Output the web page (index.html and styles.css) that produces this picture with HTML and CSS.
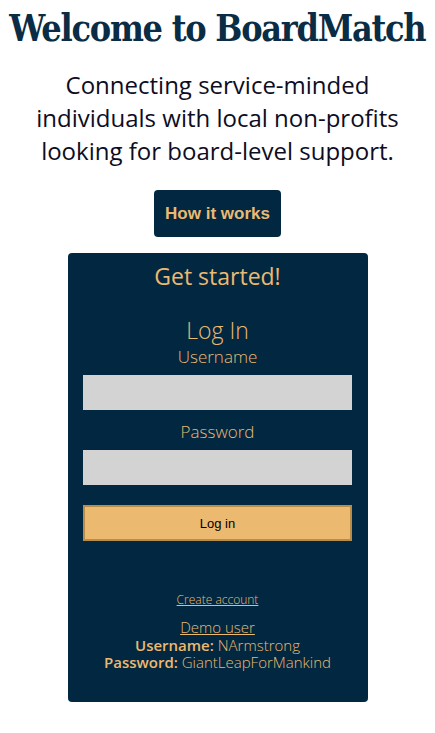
FILE: index.html
```html
<!DOCTYPE html>
<html lang="en">
<head>
<meta charset="utf-8">
<title>BoardMatch</title>
<link rel="stylesheet" href="styles.css">
</head>
<body>
<main class="page">
  <h1 class="title">Welcome to BoardMatch</h1>
  <p class="tagline">Connecting service-minded individuals with local non-profits looking for board-level support.</p>
  <a class="how-btn" href="#">How it works</a>
  <section class="card">
    <h2 class="card-heading">Get started!</h2>
    <form class="login">
      <h3 class="login-title">Log In</h3>
      <label class="field-label" for="u">Username</label>
      <input class="field" id="u" type="text">
      <label class="field-label" for="p">Password</label>
      <input class="field" id="p" type="password">
      <button class="submit" type="button">Log in</button>
    </form>
    <a class="create" href="#">Create account</a>
    <div class="demo">
      <a class="demo-link" href="#">Demo user</a>
      <div class="demo-line"><b>Username:</b> NArmstrong</div>
      <div class="demo-line"><b>Password:</b> GiantLeapForMankind</div>
    </div>
  </section>
</main>
</body>
</html>
```
FILE: styles.css
```css
html, body { margin: 0; padding: 0; background: #fff; }
.page {
  display: flex;
  flex-direction: column;
  align-items: center;
  overflow-x: hidden;
  font-family: "Open Sans", "Noto Sans", sans-serif;
}
.title {
  margin: 4px 0 0;
  font-family: "DejaVu Serif", serif;
  font-weight: bold;
  font-size: 38px;
  line-height: 48px;
  color: #0a2c44;
  letter-spacing: -1.5px;
  white-space: nowrap;
  transform: scaleX(0.845);
}
.tagline {
  margin: 16px 0 0;
  width: 390px;
  text-align: center;
  font-size: 24px;
  line-height: 33px;
  color: #0d0d1f;
}
.how-btn {
  margin-top: 23px;
  display: flex;
  align-items: center;
  justify-content: center;
  width: 127px;
  height: 47px;
  box-sizing: border-box;
  background: #012840;
  border-radius: 4px;
  color: #ecb970;
  font-family: "Liberation Sans", Arial, sans-serif;
  font-weight: bold;
  font-size: 17px;
  text-decoration: none;
}
.card {
  margin-top: 16px;
  width: 300px;
  height: 449px;
  box-sizing: border-box;
  padding: 7px 15px 0;
  background: #012840;
  border-radius: 4px;
  color: #ecb970;
  display: flex;
  flex-direction: column;
  align-items: center;
}
.card-heading {
  margin: 0;
  font-weight: 400;
  font-size: 23px;
  line-height: 32px;
}
.login {
  margin-top: 24px;
  width: 100%;
  display: flex;
  flex-direction: column;
  align-items: center;
}
.login-title {
  margin: 0 0 2px;
  font-weight: 300;
  font-size: 23px;
  line-height: 28px;
}
.field-label {
  font-weight: 300;
  font-size: 17px;
  line-height: 22px;
}
.field {
  margin: 7px 0 11px;
  width: 269px;
  height: 35px;
  box-sizing: border-box;
  border: none;
  background: #d3d3d3;
}
.submit {
  margin-top: 9px;
  width: 269px;
  height: 36px;
  box-sizing: border-box;
  background: #ecb970;
  border: 2px solid #b98c48;
  font-family: "Liberation Sans", Arial, sans-serif;
  font-size: 13px;
  color: #000;
}
.create {
  margin-top: 50px;
  font-size: 12px;
  color: #ecb970;
  font-weight: 300;
}
.demo {
  margin-top: 10px;
  display: flex;
  flex-direction: column;
  align-items: center;
  text-align: center;
  font-weight: 300;
}
.demo-link {
  font-size: 15px;
  line-height: 19px;
  color: #ecb970;
}
.demo-line {
  font-size: 15px;
  line-height: 17px;
  white-space: nowrap;
}
.demo b { font-weight: 600; }
```
